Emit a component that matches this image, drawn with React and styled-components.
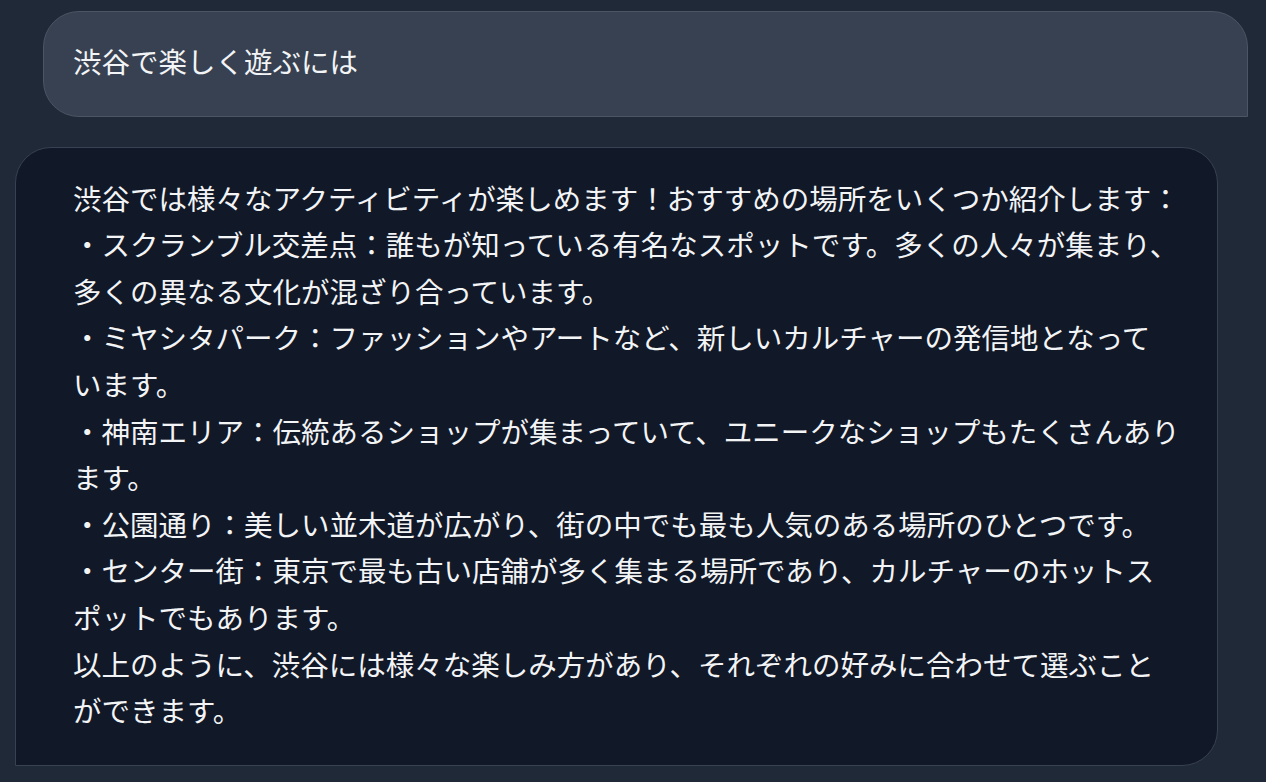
import React from 'react'
import styled, { createGlobalStyle } from 'styled-components'

const GlobalStyle = createGlobalStyle`
  * { box-sizing: border-box; }
  html, body {
    margin: 0;
    padding: 0;
    background: #1f2937;
  }
  body {
    font-family: "Noto Sans CJK JP", "Noto Sans", sans-serif;
    color: #f3f4f6;
  }
`

// each answer paragraph is kept as the lines the reference wraps at
const answer = [
  ['渋谷では様々なアクティビティが楽しめます！おすすめの場所をいくつか紹介します：'],
  ['・スクランブル交差点：誰もが知っている有名なスポットです。多くの人々が集まり、', '多くの異なる文化が混ざり合っています。'],
  ['・ミヤシタパーク：ファッションやアートなど、新しいカルチャーの発信地となって', 'います。'],
  ['・神南エリア：伝統あるショップが集まっていて、ユニークなショップもたくさんあり', 'ます。'],
  ['・公園通り：美しい並木道が広がり、街の中でも最も人気のある場所のひとつです。'],
  ['・センター街：東京で最も古い店舗が多く集まる場所であり、カルチャーのホットス', 'ポットでもあります。'],
  ['以上のように、渋谷には様々な楽しみ方があり、それぞれの好みに合わせて選ぶこと', 'ができます。'],
]

const App = () => {
  return (
    <>
      <GlobalStyle />
      <Chat>
        <Bubble $from="user">
          <Line>渋谷で楽しく遊ぶには</Line>
        </Bubble>
        <Bubble $from="assistant">
          {answer.map((para, i) => (
            <Line key={i}>
              {para.map((l, j) => (
                <React.Fragment key={j}>
                  {j > 0 && <br />}
                  {l}
                </React.Fragment>
              ))}
            </Line>
          ))}
        </Bubble>
      </Chat>
    </>
  )
}

const Chat = styled.div`
  display: flex;
  flex-direction: column;
  gap: 30px;
  padding: 11px 18px 16px 15px;
`

const Bubble = styled.div`
  border: 1px solid ${(p) => (p.$from === 'user' ? '#4b5563' : '#374151')};
  background: ${(p) => (p.$from === 'user' ? '#374151' : '#111827')};
  border-radius: ${(p) => (p.$from === 'user' ? '36px 36px 0 36px' : '36px 36px 36px 0')};
  margin: ${(p) => (p.$from === 'user' ? '0 0 0 28px' : '0 30px 0 0')};
  padding: ${(p) => (p.$from === 'user' ? '26px 29px 31px' : '27px 29px 31px 57px')};
`

const Line = styled.p`
  margin: 0;
  font-size: 28.5px;
  line-height: 46.6px;
  white-space: nowrap;
`

export default App
